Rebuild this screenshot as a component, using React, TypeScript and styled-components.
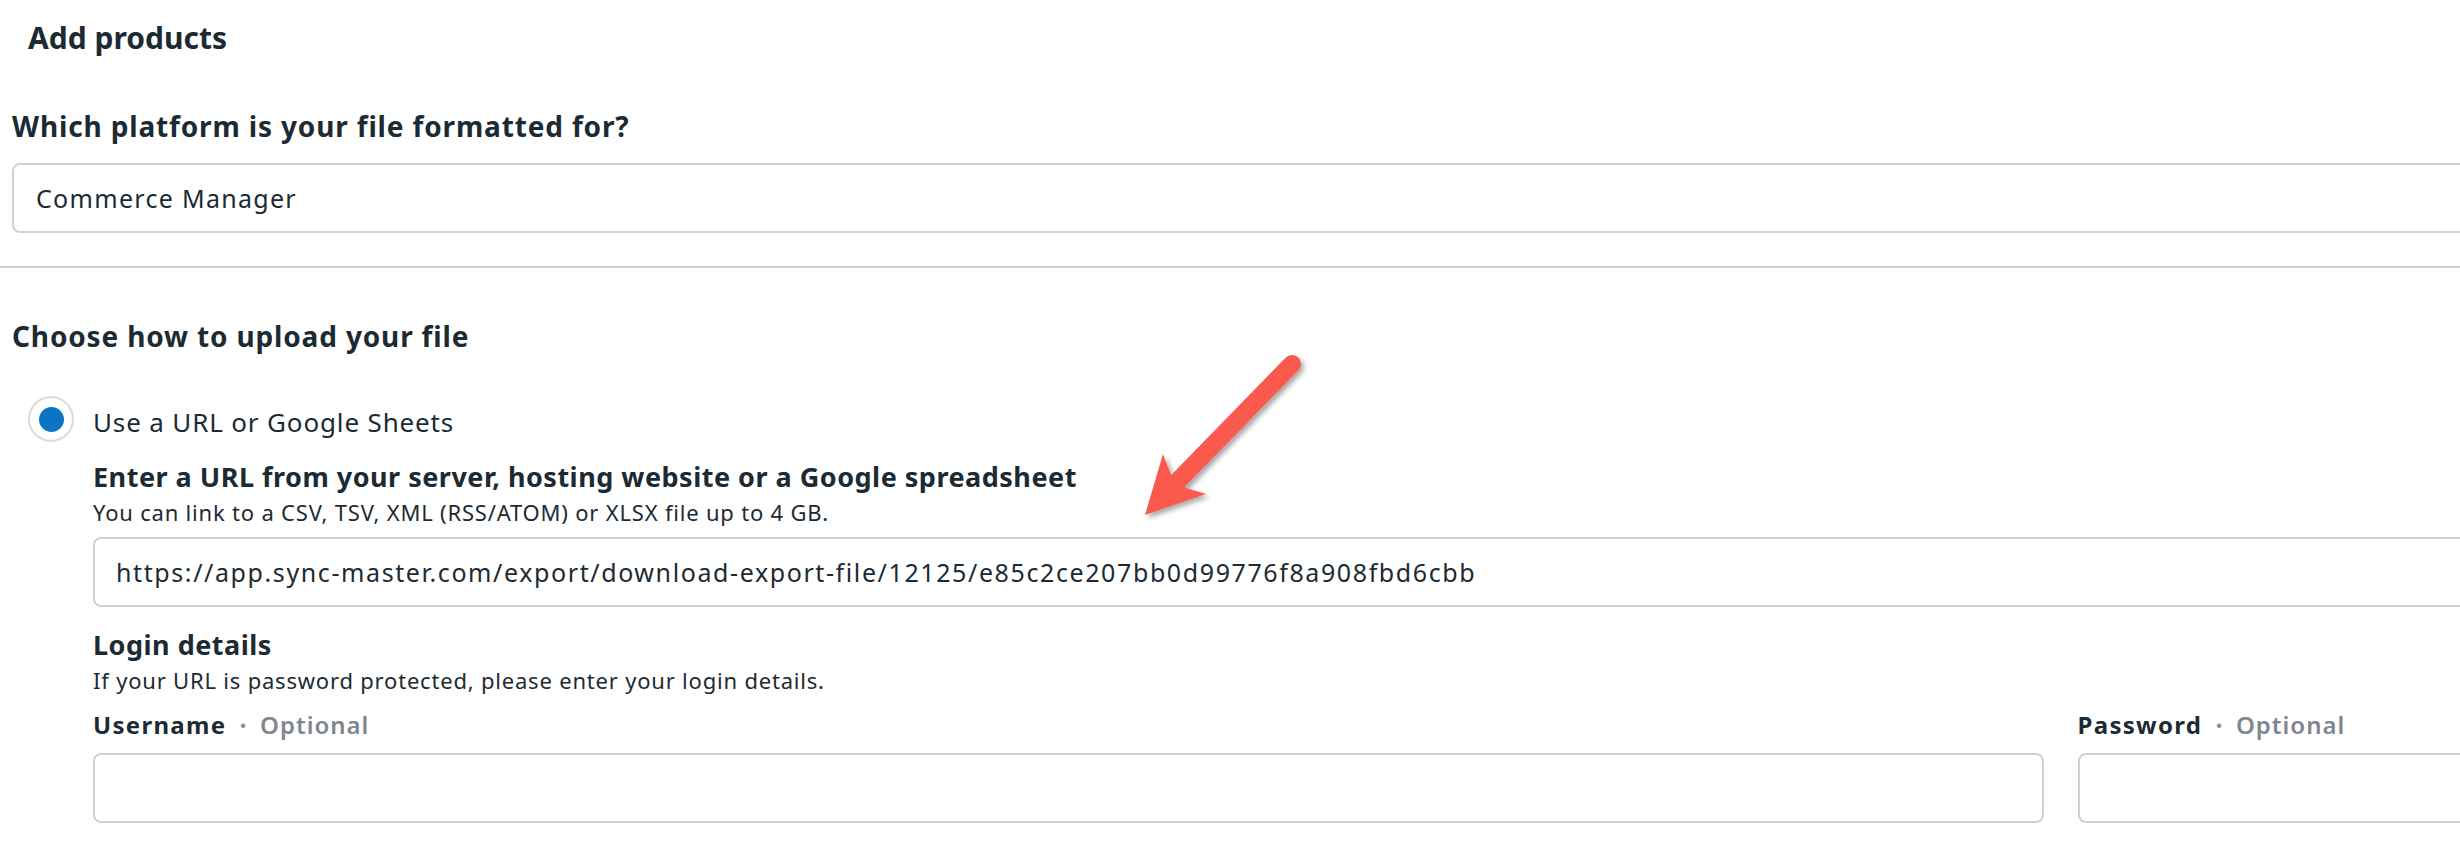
import styled, { createGlobalStyle } from 'styled-components';

const GlobalStyle = createGlobalStyle`
  html, body {
    margin: 0;
    background: #ffffff;
    overflow: hidden;
  }
  body {
    font-family: "Noto Sans", "Open Sans", Arial, sans-serif;
    color: #1c2b33;
  }
`;

function Arrow() {
  return (
    <StArrow width="200" height="190" viewBox="0 0 200 190">
      <defs>
        <filter id="arrowShadow" x="-20%" y="-20%" width="140%" height="140%">
          <feDropShadow dx="3" dy="3" stdDeviation="2.5" floodColor="#000" floodOpacity="0.35" />
        </filter>
      </defs>
      <g filter="url(#arrowShadow)" fill="#fa5a4d">
        <line x1="172" y1="24" x2="56" y2="143" stroke="#fa5a4d" strokeWidth="18" strokeLinecap="round" />
        <polygon points="25,175 43,114 51,135 66,148 86,154" />
      </g>
    </StArrow>
  );
}

function FieldLabel({ name }: { name: string }) {
  return (
    <StLabel>
      {name}
      <StDot>•</StDot>
      <StOptional>Optional</StOptional>
    </StLabel>
  );
}

function App() {
  return (
    <>
      <GlobalStyle />
      <StPage>
        <StTitle>Add products</StTitle>

        <StHeading $top={53}>Which platform is your file formatted for?</StHeading>
        <StSelect>Commerce Manager</StSelect>

        <StDivider />

        <StHeading $top={51}>Choose how to upload your file</StHeading>
        <StRadioRow>
          <StRadio>
            <StRadioDot />
          </StRadio>
          <StRadioLabel>Use a URL or Google Sheets</StRadioLabel>
        </StRadioRow>

        <StIndent>
          <StSubHeading $top={18}>Enter a URL from your server, hosting website or a Google spreadsheet</StSubHeading>
          <StHelp>You can link to a CSV, TSV, XML (RSS/ATOM) or XLSX file up to 4 GB.</StHelp>
          <StInput $top={10}>https://app.sync-master.com/export/download-export-file/12125/e85c2ce207bb0d99776f8a908fbd6cbb</StInput>

          <StSubHeading $top={21}>Login details</StSubHeading>
          <StHelp>If your URL is password protected, please enter your login details.</StHelp>

          <StLoginGrid>
            <StField>
              <FieldLabel name="Username" />
              <StInput $top={13} />
            </StField>
            <StField>
              <FieldLabel name="Password" />
              <StInput $top={13} />
            </StField>
          </StLoginGrid>
        </StIndent>

        <Arrow />
      </StPage>
    </>
  );
}

export default App;

const StPage = styled.div`
  position: relative;
  width: 4040px;
  box-sizing: border-box;
  padding: 0 12px;
  display: flex;
  flex-direction: column;
`;

const StTitle = styled.h1`
  margin: 20px 0 0 16px;
  font-size: 30px;
  line-height: 36px;
  font-weight: 700;
`;

const StHeading = styled.h2<{ $top: number }>`
  margin: ${(p) => p.$top}px 0 0;
  font-size: 28px;
  line-height: 34px;
  font-weight: 700;
  letter-spacing: 0.85px;
`;

const StSelect = styled.div`
  margin-top: 20px;
  height: 70px;
  box-sizing: border-box;
  border: 2px solid #ccd2d8;
  border-radius: 8px;
  padding: 0 22px;
  display: flex;
  align-items: center;
  font-size: 25px;
  letter-spacing: 1.3px;
`;

const StDivider = styled.div`
  margin: 33px -12px 0;
  height: 2px;
  background: #ccd0d5;
`;

const StRadioRow = styled.div`
  margin: 43px 0 0 16px;
  display: flex;
  align-items: center;
  gap: 19px;
`;

const StRadio = styled.span`
  width: 46px;
  height: 46px;
  box-sizing: border-box;
  border: 2px solid #d8dbdf;
  border-radius: 50%;
  display: grid;
  place-items: center;
  flex-shrink: 0;
`;

const StRadioDot = styled.span`
  width: 25px;
  height: 25px;
  border-radius: 50%;
  background: #0b74c4;
`;

const StRadioLabel = styled.span`
  font-size: 26px;
  line-height: 34px;
  padding-top: 6px;
  letter-spacing: 0.85px;
`;

const StIndent = styled.div`
  margin-left: 81px;
  display: flex;
  flex-direction: column;
`;

const StSubHeading = styled.h3<{ $top: number }>`
  margin: ${(p) => p.$top}px 0 0;
  font-size: 27px;
  line-height: 33px;
  font-weight: 700;
  letter-spacing: 0.5px;
`;

const StHelp = styled.p`
  margin: 4px 0 0;
  font-size: 22px;
  line-height: 30px;
  letter-spacing: 0.8px;
`;

const StInput = styled.div<{ $top: number }>`
  margin-top: ${(p) => p.$top}px;
  height: 70px;
  box-sizing: border-box;
  border: 2px solid #ccd2d8;
  border-radius: 8px;
  padding: 0 21px;
  display: flex;
  align-items: center;
  font-size: 25px;
  letter-spacing: 1.6px;
  white-space: nowrap;
`;

const StLoginGrid = styled.div`
  margin-top: 15px;
  display: grid;
  grid-template-columns: 1fr 1fr;
  column-gap: 34px;
`;

const StField = styled.div`
  display: flex;
  flex-direction: column;
`;

const StLabel = styled.div`
  font-size: 24px;
  line-height: 30px;
  font-weight: 700;
  letter-spacing: 1.3px;
  display: flex;
  align-items: center;
`;

const StDot = styled.span`
  color: #8a9096;
  font-size: 15px;
  margin: 0 14px 0 14px;
  letter-spacing: 0;
`;

const StOptional = styled.span`
  color: #7f868c;
  font-weight: 600;
  letter-spacing: 1px;
`;

const StArrow = styled.svg`
  position: absolute;
  left: 1120px;
  top: 340px;
  overflow: visible;
`;
